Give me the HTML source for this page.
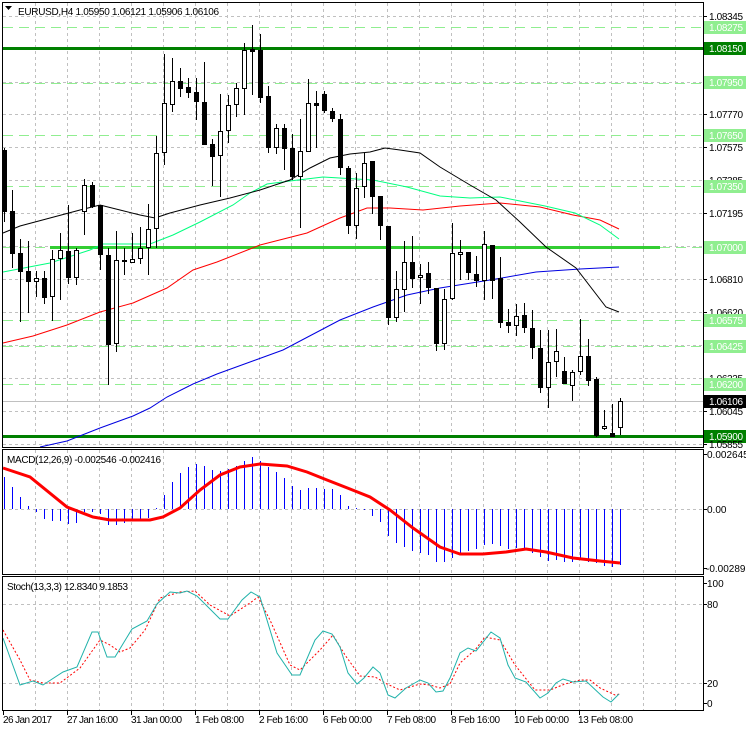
<!DOCTYPE html>
<html><head><meta charset="utf-8"><style>
html,body{margin:0;padding:0;background:#fff;}
svg{display:block;font-family:"Liberation Sans",sans-serif;}
</style></head><body>
<svg width="746" height="731" viewBox="0 0 746 731" xmlns="http://www.w3.org/2000/svg">
<rect width="746" height="731" fill="#fff"/>
<g stroke="#c0c0c0" stroke-width="1" stroke-dasharray="3,3" shape-rendering="crispEdges">
<path d="M35.5 3V447M67.5 3V447M99.5 3V447M131.5 3V447M163.5 3V447M195.5 3V447M227.5 3V447M259.5 3V447M291.5 3V447M323.5 3V447M355.5 3V447M387.5 3V447M419.5 3V447M451.5 3V447M483.5 3V447M515.5 3V447M547.5 3V447M579.5 3V447M611.5 3V447M643.5 3V447M675.5 3V447"/>
<path d="M35.5 450V574M67.5 450V574M99.5 450V574M131.5 450V574M163.5 450V574M195.5 450V574M227.5 450V574M259.5 450V574M291.5 450V574M323.5 450V574M355.5 450V574M387.5 450V574M419.5 450V574M451.5 450V574M483.5 450V574M515.5 450V574M547.5 450V574M579.5 450V574M611.5 450V574M643.5 450V574M675.5 450V574"/>
<path d="M35.5 577V710M67.5 577V710M99.5 577V710M131.5 577V710M163.5 577V710M195.5 577V710M227.5 577V710M259.5 577V710M291.5 577V710M323.5 577V710M355.5 577V710M387.5 577V710M419.5 577V710M451.5 577V710M483.5 577V710M515.5 577V710M547.5 577V710M579.5 577V710M611.5 577V710M643.5 577V710M675.5 577V710"/>
<path d="M3 16.5H703M3 49.5H703M3 82.5H703M3 114.5H703M3 147.5H703M3 180.5H703M3 213.5H703M3 246.5H703M3 279.5H703M3 312.5H703M3 345.5H703M3 378.5H703M3 411.5H703M3 444.5H703"/>
<path d="M3 509.5H703M3 604.5H703M3 683.5H703"/>
</g>
<g stroke="#90ee90" stroke-width="1" stroke-dasharray="10,6" shape-rendering="crispEdges">
<path d="M3 27.5H703M3 83.5H703M3 135.5H703M3 186.5H703M3 320.5H703M3 346.5H703M3 384.5H703M660 247.5H703M3 247.5H50"/>
</g>
<line x1="3" y1="401.5" x2="703" y2="401.5" stroke="#c0c0c0" shape-rendering="crispEdges"/>
<rect x="3" y="47" width="700" height="3" fill="#008000"/>
<rect x="3" y="435" width="700" height="3" fill="#008000"/>
<rect x="50" y="246" width="610" height="3" fill="#32cd32"/>
<g fill="none" stroke-width="1">
<polyline stroke="#0000e0" points="40,447 67,441 100,428 133,416 150,408 167,397 193,384 217,374 250,362 283,350 340,320 373,307 407,295 440,288 490,280 536,272 580,269 619,267"/>
<polyline stroke="#ff0000" points="3,343 33,336 67,325 100,312 133,303 167,288 193,270 217,262 250,249 260,245 307,233 340,218 367,208 390,208 423,210 460,206 500,203 540,207 573,215 600,220 619,229"/>
<polyline stroke="#00ff7f" points="3,272 50,263 90,250 103,244 150,244 173,235 200,222 233,205 250,193 267,184 290,181 323,177 373,180 407,187 440,196 470,198 500,197 520,201 545,206 575,213 600,225 619,239"/>
<polyline stroke="#000" points="3,233 20,226 50,218 80,210 100,205 120,210 140,215 155,218 170,213 200,205 230,198 260,190 290,180 310,168 330,158 350,154 370,152 385,148 400,150 420,153 440,167 470,185 496,200 520,222 546,247 576,268 606,307 619,312"/>
</g>
<path stroke="#000" stroke-width="1" fill="none" shape-rendering="crispEdges" d="M4.5 148V222M12.5 190V268M20.5 239V322M28.5 241V313M36.5 271V297M44.5 271V304M52.5 250V321M60.5 233V300M68.5 205V284M76.5 248V285M84.5 179V235M92.5 182V208M100.5 205V270M108.5 248V385M116.5 231V352M124.5 248V275M132.5 233V263M140.5 227V264M148.5 204V275M156.5 136V248M164.5 54V165M172.5 58V112M180.5 68V97M188.5 78V98M196.5 78V120M204.5 62V145M212.5 139V186M220.5 94V197M228.5 95V143M236.5 83V117M244.5 43V115M252.5 25V95M260.5 34V103M268.5 86V153M276.5 124V154M284.5 124V170M292.5 134V180M300.5 119V228M308.5 79V152M316.5 91V148M324.5 91V113M332.5 108V122M340.5 114V175M348.5 166V234M356.5 173V239M364.5 153V198M372.5 161V214M380.5 196V240M388.5 226V325M396.5 271V322M404.5 241V312M412.5 236V288M420.5 264V304M428.5 262V294M436.5 288V351M444.5 289V350M452.5 223V300M460.5 240V280M468.5 252V280M476.5 256V287M484.5 231V300M492.5 245V299M500.5 257V328M508.5 309V333M516.5 304V336M524.5 303V333M532.5 310V359M540.5 330V393M548.5 330V408M556.5 329V377M564.5 357V379M572.5 370V401M580.5 319V375M588.5 339V386M596.5 377V437M604.5 410V430M612.5 404V436M620.5 398V435"/>
<g fill="#000" shape-rendering="crispEdges">
<rect x="2" y="150" width="5" height="62"/><rect x="10" y="211" width="5" height="43"/><rect x="18" y="253" width="5" height="19"/><rect x="26" y="271" width="5" height="11"/><rect x="42" y="278" width="5" height="20"/><rect x="66" y="251" width="5" height="27"/><rect x="90" y="185" width="5" height="22"/><rect x="98" y="205" width="5" height="50"/><rect x="106" y="255" width="5" height="90"/><rect x="122" y="260" width="5" height="2"/><rect x="178" y="81" width="5" height="8"/><rect x="186" y="87" width="5" height="6"/><rect x="194" y="92" width="5" height="10"/><rect x="202" y="102" width="5" height="43"/><rect x="210" y="144" width="5" height="13"/><rect x="250" y="49" width="5" height="3"/><rect x="258" y="50" width="5" height="48"/><rect x="266" y="96" width="5" height="52"/><rect x="282" y="128" width="5" height="21"/><rect x="290" y="148" width="5" height="29"/><rect x="314" y="103" width="5" height="3"/><rect x="322" y="94" width="5" height="17"/><rect x="330" y="111" width="5" height="8"/><rect x="338" y="119" width="5" height="49"/><rect x="346" y="168" width="5" height="58"/><rect x="370" y="161" width="5" height="36"/><rect x="378" y="196" width="5" height="30"/><rect x="386" y="226" width="5" height="92"/><rect x="410" y="262" width="5" height="17"/><rect x="426" y="273" width="5" height="15"/><rect x="434" y="288" width="5" height="56"/><rect x="466" y="252" width="5" height="21"/><rect x="474" y="274" width="5" height="7"/><rect x="490" y="245" width="5" height="36"/><rect x="498" y="278" width="5" height="45"/><rect x="506" y="322" width="5" height="4"/><rect x="522" y="315" width="5" height="13"/><rect x="530" y="328" width="5" height="20"/><rect x="538" y="348" width="5" height="40"/><rect x="562" y="371" width="5" height="13"/><rect x="586" y="356" width="5" height="25"/><rect x="594" y="379" width="5" height="57"/><rect x="610" y="433" width="5" height="4"/>
</g>
<g fill="#fff" stroke="#000" stroke-width="1" shape-rendering="crispEdges">
<rect x="34.5" y="278.5" width="4" height="3"/><rect x="50.5" y="259.5" width="4" height="37"/><rect x="58.5" y="250.5" width="4" height="8"/><rect x="74.5" y="250.5" width="4" height="27"/><rect x="82.5" y="185.5" width="4" height="26"/><rect x="114.5" y="260.5" width="4" height="83"/><rect x="130.5" y="259.5" width="4" height="3"/><rect x="138.5" y="248.5" width="4" height="10"/><rect x="146.5" y="229.5" width="4" height="18"/><rect x="154.5" y="153.5" width="4" height="75"/><rect x="162.5" y="103.5" width="4" height="49"/><rect x="170.5" y="81.5" width="4" height="23"/><rect x="218.5" y="131.5" width="4" height="24"/><rect x="226.5" y="105.5" width="4" height="25"/><rect x="234.5" y="88.5" width="4" height="16"/><rect x="242.5" y="50.5" width="4" height="38"/><rect x="274.5" y="128.5" width="4" height="19"/><rect x="298.5" y="151.5" width="4" height="25"/><rect x="306.5" y="103.5" width="4" height="48"/><rect x="354.5" y="188.5" width="4" height="37"/><rect x="362.5" y="163.5" width="4" height="23"/><rect x="394.5" y="289.5" width="4" height="28"/><rect x="402.5" y="262.5" width="4" height="27"/><rect x="418.5" y="275.5" width="4" height="2"/><rect x="442.5" y="299.5" width="4" height="44"/><rect x="450.5" y="253.5" width="4" height="45"/><rect x="458.5" y="252.5" width="4" height="2"/><rect x="482.5" y="244.5" width="4" height="36"/><rect x="514.5" y="316.5" width="4" height="9"/><rect x="546.5" y="362.5" width="4" height="25"/><rect x="554.5" y="351.5" width="4" height="10"/><rect x="570.5" y="372.5" width="4" height="13"/><rect x="578.5" y="356.5" width="4" height="15"/><rect x="602.5" y="426.5" width="4" height="2"/><rect x="618.5" y="401.5" width="4" height="26"/>
</g>
<path stroke="#0000ff" stroke-width="1" fill="none" shape-rendering="crispEdges" d="M4.5 509V477M12.5 509V487M20.5 509V497M28.5 509V506M36.5 509V512M44.5 509V519M52.5 509V521M60.5 509V521M68.5 509V524M76.5 509V523M84.5 509V512M92.5 509V512M100.5 509V514M108.5 509V525M116.5 509V525M124.5 509V523M132.5 509V521M140.5 509V521M148.5 509V518M156.5 509V508M164.5 509V495M172.5 509V482M180.5 509V473M188.5 509V467M196.5 509V464M204.5 509V466M212.5 509V470M220.5 509V471M228.5 509V469M236.5 509V466M244.5 509V461M252.5 509V457M260.5 509V461M268.5 509V467M276.5 509V472M284.5 509V478M292.5 509V486M300.5 509V490M308.5 509V488M316.5 509V488M324.5 509V489M332.5 509V489M340.5 509V495M348.5 509V506M356.5 509V508M364.5 509V510M372.5 509V516M380.5 509V522M388.5 509V536M396.5 509V543M404.5 509V547M412.5 509V551M420.5 509V553M428.5 509V555M436.5 509V562M444.5 509V562M452.5 509V558M460.5 509V554M468.5 509V551M476.5 509V549M484.5 509V545M492.5 509V544M500.5 509V546M508.5 509V549M516.5 509V548M524.5 509V549M532.5 509V553M540.5 509V557M548.5 509V561M556.5 509V560M564.5 509V562M572.5 509V562M580.5 509V560M588.5 509V562M596.5 509V563M604.5 509V566M612.5 509V567M620.5 509V565"/>
<polyline fill="none" stroke="#ff0000" stroke-width="3" points="3,468 30,477 67,507 93,517 110,520 150,520 163,517 180,508 200,490 220,475 240,467 260,464 287,466 307,472 327,480 350,489 370,497 390,510 413,528 440,547 460,554 483,554 506,552 526,549 546,552 573,558 600,561 620,563"/>
<polyline fill="none" stroke="#ff0000" stroke-width="1" stroke-dasharray="2,2" points="3,630 20,660 30,680 43,683 60,683 80,668 100,640 110,645 120,652 130,648 145,630 160,598 180,592 195,591 210,605 230,616 250,603 258,597 270,620 290,665 300,670 320,650 333,635 345,655 360,676 375,677 387,684 400,690 420,684 430,685 440,688 450,684 460,663 475,650 485,637 500,640 515,665 535,690 550,690 565,684 580,680 590,680 600,688 615,695 620,694"/>
<polyline fill="none" stroke="#20b2aa" stroke-width="1" points="3,638 20,685 33,681 43,685 63,672 77,667 92,632 98,632 107,657 115,657 132,629 147,621 157,604 170,592 180,593 187,591 197,596 220,619 228,619 242,600 251,592 260,597 277,653 292,675 300,675 315,640 323,631 332,634 340,647 348,673 357,684 364,678 373,667 380,673 388,695 395,698 406,688 420,680 428,683 436,692 443,691 450,678 460,653 468,648 476,651 491,632 500,638 508,665 515,678 526,682 540,698 548,693 556,683 563,679 573,682 586,681 603,697 611,702 619,694"/>
<g fill="none" stroke="#000" stroke-width="1" shape-rendering="crispEdges">
<rect x="2.5" y="2.5" width="701" height="445"/>
<rect x="2.5" y="449.5" width="701" height="125"/>
<rect x="2.5" y="576.5" width="701" height="134"/>
<path d="M703 16.5h4M703 114.5h4M703 147.5h4M703 180.5h4M703 213.5h4M703 279.5h4M703 312.5h4M703 378.5h4M703 411.5h4M703 444.5h4M703 454.5h4M703 509.5h4M703 568.5h4M703 583.5h4M703 604.5h4M703 683.5h4M703 703.5h4M3.5 711v4M67.5 711v4M131.5 711v4M195.5 711v4M259.5 711v4M323.5 711v4M387.5 711v4M451.5 711v4M515.5 711v4M579.5 711v4"/>
</g>
<g font-size="10" fill="#000">
<text x="709" y="184" textLength="34">1.07385</text>
<text x="709" y="316" textLength="34">1.06620</text>
<text x="709" y="382" textLength="34">1.06235</text>
</g>
<g shape-rendering="crispEdges">
<rect x="704" y="21" width="42" height="13" fill="#90ee90"/>
<rect x="704" y="42" width="42" height="13" fill="#008000"/>
<rect x="704" y="76" width="42" height="13" fill="#90ee90"/>
<rect x="704" y="129" width="42" height="13" fill="#90ee90"/>
<rect x="704" y="180" width="42" height="13" fill="#90ee90"/>
<rect x="704" y="241" width="42" height="13" fill="#90ee90"/>
<rect x="704" y="314" width="42" height="13" fill="#90ee90"/>
<rect x="704" y="340" width="42" height="13" fill="#90ee90"/>
<rect x="704" y="378" width="42" height="13" fill="#90ee90"/>
<rect x="704" y="395" width="42" height="13" fill="#000"/>
<rect x="704" y="430" width="42" height="13" fill="#008000"/>
</g>
<g font-size="10" fill="#000">
<text x="709" y="20" textLength="34">1.08345</text>
<text x="709" y="118" textLength="34">1.07770</text>
<text x="709" y="151" textLength="34">1.07575</text>
<text x="709" y="217" textLength="34">1.07195</text>
<text x="709" y="283" textLength="34">1.06810</text>
<text x="709" y="415" textLength="34">1.06045</text>
<text x="709" y="448" textLength="34">1.05855</text>
</g>
<g font-size="10" fill="#fff">
<text x="709" y="31" textLength="34">1.08275</text>
<text x="709" y="52" textLength="34">1.08150</text>
<text x="709" y="86" textLength="34">1.07950</text>
<text x="709" y="139" textLength="34">1.07650</text>
<text x="709" y="190" textLength="34">1.07350</text>
<text x="709" y="251" textLength="34">1.07000</text>
<text x="709" y="324" textLength="34">1.06575</text>
<text x="709" y="350" textLength="34">1.06425</text>
<text x="709" y="388" textLength="34">1.06200</text>
<text x="709" y="405" textLength="34">1.06106</text>
<text x="709" y="440" textLength="34">1.05900</text>
</g>
<g font-size="10" fill="#000">
<text x="707" y="458">0.002645</text>
<text x="707" y="513">0.00</text>
<text x="706" y="572">-0.002895</text>
<text x="707" y="587">100</text>
<text x="707" y="608">80</text>
<text x="707" y="687">20</text>
<text x="707" y="707">0</text>
<path d="M5 6h7l-3.5 4z" fill="#000"/>
<text x="18" y="15" textLength="201">EURUSD,H4  1.05950 1.06121 1.05906 1.06106</text>
<text x="7" y="463" textLength="154">MACD(12,26,9) -0.002546 -0.002416</text>
<text x="7" y="590" textLength="121">Stoch(13,3,3) 12.8340 9.1853</text>
<text x="3" y="723" textLength="49">26 Jan 2017</text>
<text x="67" y="723" textLength="51">27 Jan 16:00</text>
<text x="131" y="723" textLength="51">31 Jan 00:00</text>
<text x="195" y="723" textLength="49">1 Feb 08:00</text>
<text x="259" y="723" textLength="49">2 Feb 16:00</text>
<text x="323" y="723" textLength="49">6 Feb 00:00</text>
<text x="387" y="723" textLength="49">7 Feb 08:00</text>
<text x="451" y="723" textLength="49">8 Feb 16:00</text>
<text x="514" y="723" textLength="55">10 Feb 00:00</text>
<text x="578" y="723" textLength="55">13 Feb 08:00</text>
</g>
</svg>
</body></html>
